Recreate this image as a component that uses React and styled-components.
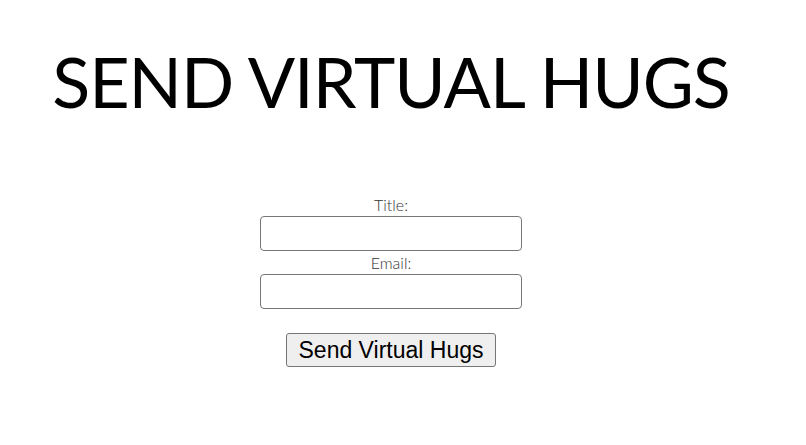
import styled, { createGlobalStyle } from 'styled-components';

const GlobalStyle = createGlobalStyle`
  body {
    margin: 0;
    background: #ffffff;
    font-family: Lato, "Open Sans", sans-serif;
  }
`;

const Page = styled.div`
  width: 782px;
  display: flex;
  flex-direction: column;
  align-items: center;
`;

const Title = styled.h1`
  margin: 41px 0 0;
  font-family: Lato, sans-serif;
  font-weight: 400;
  font-size: 70px;
  line-height: 80px;
  letter-spacing: -1px;
  color: #000;
`;

const Form = styled.form`
  margin-top: 72px;
  display: flex;
  flex-direction: column;
  align-items: center;
`;

const Label = styled.label`
  font-family: Lato, sans-serif;
  font-weight: 300;
  font-size: 16px;
  line-height: 23px;
  color: #333;
`;

const Field = styled.input`
  box-sizing: border-box;
  width: 262px;
  height: 35px;
  margin: 0;
  border: 1.5px solid #767676;
  border-radius: 4px;
  background: #fff;
`;

const SendButton = styled.button`
  margin-top: 24px;
  box-sizing: border-box;
  width: 210px;
  height: 34px;
  padding: 0;
  font-family: "Liberation Sans", Arial, sans-serif;
  font-size: 23px;
  color: #000;
  background: #efefef;
  border: 1.5px solid #767676;
  border-radius: 3px;
`;

export default function App() {
  return (
    <>
      <GlobalStyle />
      <Page>
        <Title>SEND VIRTUAL HUGS</Title>
        <Form onSubmit={(e) => e.preventDefault()}>
          <Label htmlFor="title">Title:</Label>
          <Field id="title" type="text" />
          <Label htmlFor="email">Email:</Label>
          <Field id="email" type="email" />
          <SendButton type="submit">Send Virtual Hugs</SendButton>
        </Form>
      </Page>
    </>
  );
}
